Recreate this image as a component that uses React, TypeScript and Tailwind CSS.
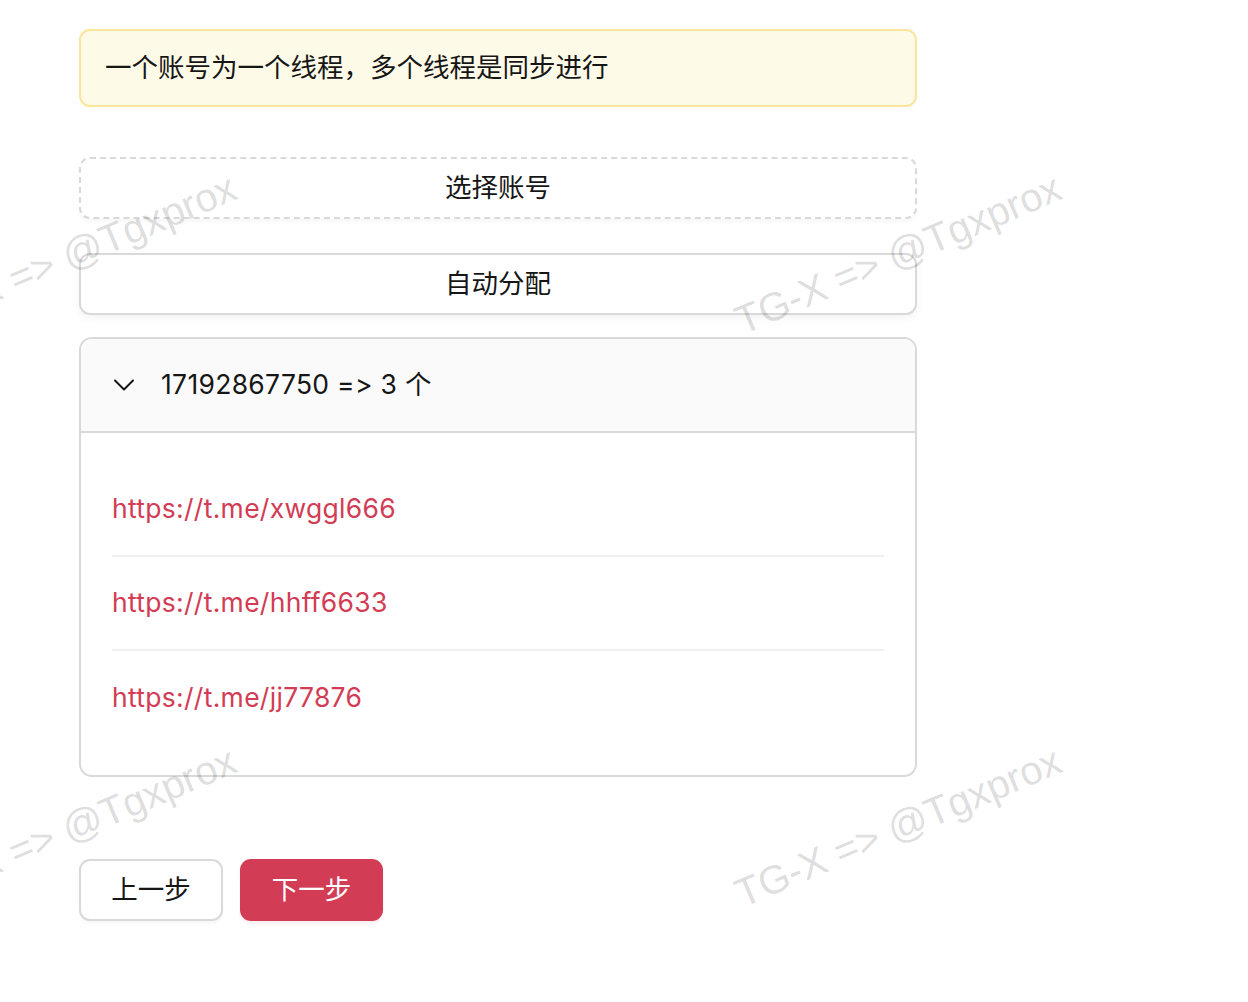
import { ChevronDown } from "lucide-react";

const links = ["https://t.me/xwggl666", "https://t.me/hhff6633", "https://t.me/jj77876"];

const marks = [
  { left: -88, top: 302 },
  { left: 737, top: 302 },
  { left: -88, top: 875 },
  { left: 737, top: 875 },
];

export default function App() {
  return (
    <div
      className="relative min-h-[1002px] w-full overflow-hidden bg-white text-[#161616]"
      style={{ fontFamily: "Inter, 'Noto Sans CJK SC', sans-serif", fontFeatureSettings: "'calt' 0, 'liga' 0" }}
    >
      <div className="ml-[79px] flex w-[838px] flex-col pt-[29px]">
        <div className="flex h-[78px] items-center rounded-[11px] border-2 border-[#fbe59b] bg-[#fefae8] px-[24px] text-[26.5px]">
          一个账号为一个线程，多个线程是同步进行
        </div>

        <button className="mt-[50px] flex h-[62px] items-center justify-center rounded-[11px] border-2 border-dashed border-[#d9d9d9] bg-white text-[26.5px] shadow-[0_3px_3px_rgba(0,0,0,0.03)]">
          选择账号
        </button>

        <button className="mt-[34px] flex h-[62px] items-center justify-center rounded-[11px] border-2 border-[#d9d9d9] bg-white text-[26.5px] shadow-[0_3px_10px_rgba(0,0,0,0.05)]">
          自动分配
        </button>

        <div className="mt-[22px] overflow-hidden rounded-[13px] border-2 border-[#d9d9d9]">
          <div className="flex h-[94px] items-center gap-[19px] border-b-2 border-[#d9d9d9] bg-[#fafafa] pl-[25px] text-[26.5px] tracking-[0.3px]">
            <ChevronDown className="h-[36px] w-[36px]" strokeWidth={1.3} />
            <span>17192867750 =&gt; 3 个</span>
          </div>
          <div className="px-[31px] py-[30px]">
            {links.map((l, i) => (
              <div
                key={l}
                className={`flex h-[94px] items-center text-[26.5px] tracking-[0.3px] text-[#d23c55] ${
                  i < links.length - 1 ? "border-b-2 border-[#f0f0f0]" : ""
                }`}
              >
                {l}
              </div>
            ))}
          </div>
        </div>

        <div className="mt-[82px] flex gap-[17px]">
          <button className="flex h-[62px] w-[144px] items-center justify-center rounded-[11px] border-2 border-[#d9d9d9] bg-white text-[26.5px] shadow-[0_3px_3px_rgba(0,0,0,0.03)]">
            上一步
          </button>
          <button className="flex h-[62px] w-[143px] items-center justify-center rounded-[11px] bg-[#d23c55] text-[26.5px] text-white shadow-[0_3px_3px_rgba(210,60,85,0.08)]">
            下一步
          </button>
        </div>
      </div>

      <div className="pointer-events-none absolute inset-0">
        {marks.map((m, i) => (
          <span
            key={i}
            className="absolute origin-left whitespace-nowrap text-[40px] leading-none text-black/15"
            style={{ left: m.left, top: m.top, transform: "rotate(-23deg)", fontFamily: "Arial, 'Liberation Sans', sans-serif" }}
          >
            TG-X =&gt; @Tgxprox
          </span>
        ))}
      </div>
    </div>
  );
}
